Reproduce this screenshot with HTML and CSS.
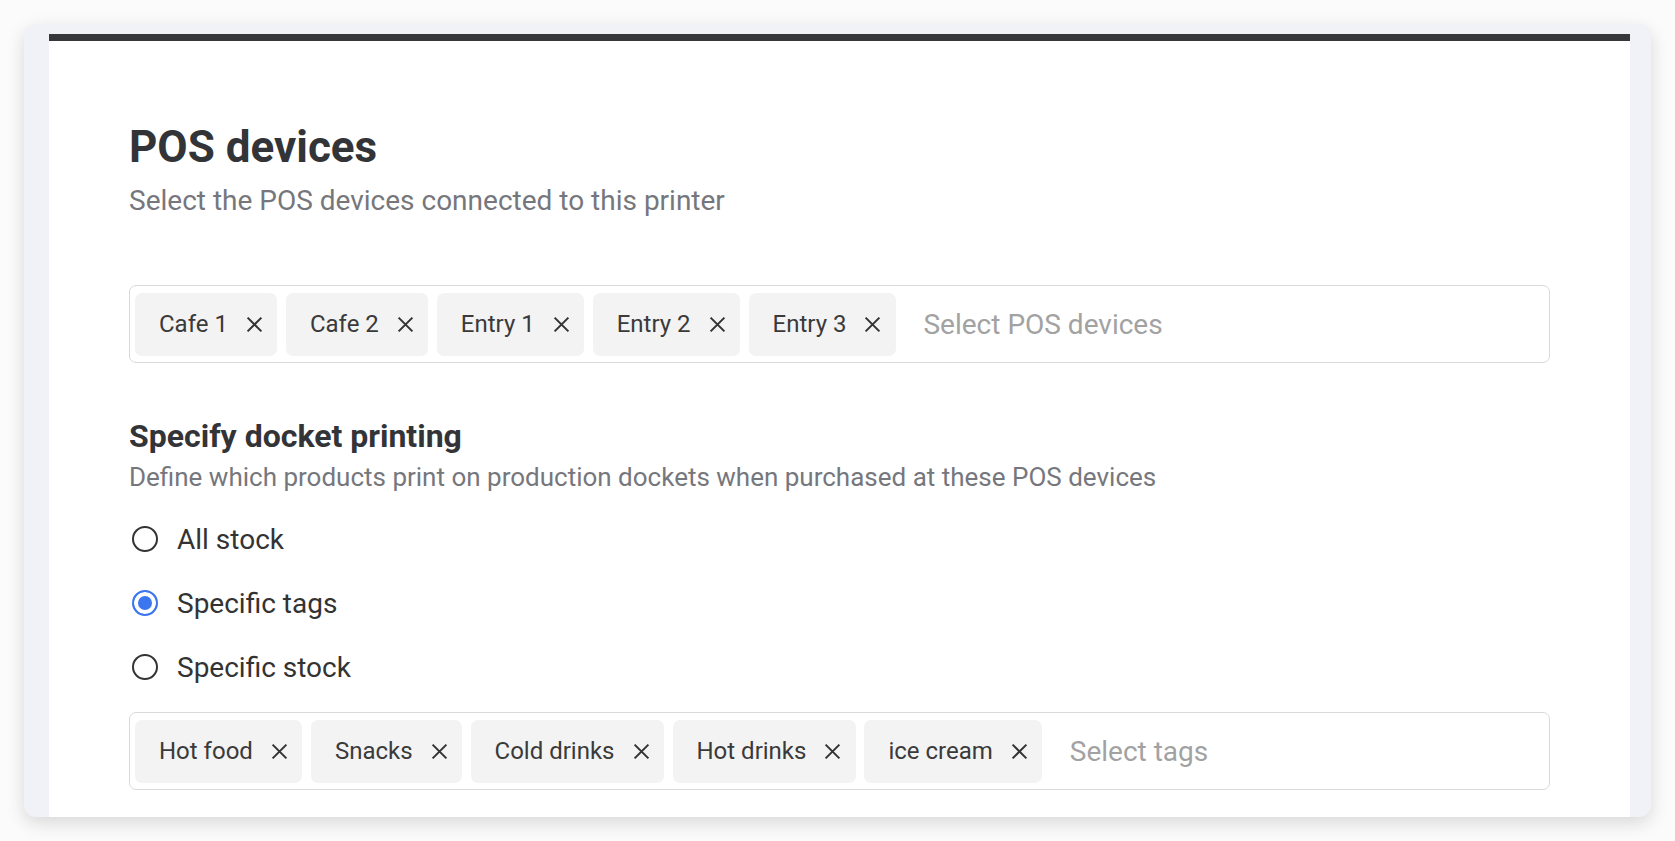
FILE: index.html
```html
<!DOCTYPE html>
<html lang="en">
<head>
    <meta charset="UTF-8">
    <meta name="viewport" content="width=device-width, initial-scale=1.0">
    <title>Printer settings</title>
    <link rel="stylesheet" href="styles.css">
</head>
<body>
    <div class="frame">
        <div class="panel">
            <h1 class="title">POS devices</h1>
            <p class="subtitle">Select the POS devices connected to this printer</p>

            <div class="select-box">
                <span class="chip">Cafe 1 <svg class="chip-x" viewBox="0 0 16 16"><path d="M1.5 1.5L14.5 14.5M14.5 1.5L1.5 14.5"/></svg></span>
                <span class="chip">Cafe 2 <svg class="chip-x" viewBox="0 0 16 16"><path d="M1.5 1.5L14.5 14.5M14.5 1.5L1.5 14.5"/></svg></span>
                <span class="chip">Entry 1 <svg class="chip-x" viewBox="0 0 16 16"><path d="M1.5 1.5L14.5 14.5M14.5 1.5L1.5 14.5"/></svg></span>
                <span class="chip">Entry 2 <svg class="chip-x" viewBox="0 0 16 16"><path d="M1.5 1.5L14.5 14.5M14.5 1.5L1.5 14.5"/></svg></span>
                <span class="chip">Entry 3 <svg class="chip-x" viewBox="0 0 16 16"><path d="M1.5 1.5L14.5 14.5M14.5 1.5L1.5 14.5"/></svg></span>
                <input type="text" placeholder="Select POS devices">
            </div>

            <h2 class="section-title">Specify docket printing</h2>
            <p class="section-desc">Define which products print on production dockets when purchased at these POS devices</p>

            <div class="options">
                <label class="option"><input type="radio" name="docket"> <span>All stock</span></label>
                <label class="option"><input type="radio" name="docket" checked> <span>Specific tags</span></label>
                <label class="option"><input type="radio" name="docket"> <span>Specific stock</span></label>
            </div>

            <div class="select-box tags-box">
                <span class="chip">Hot food <svg class="chip-x" viewBox="0 0 16 16"><path d="M1.5 1.5L14.5 14.5M14.5 1.5L1.5 14.5"/></svg></span>
                <span class="chip">Snacks <svg class="chip-x" viewBox="0 0 16 16"><path d="M1.5 1.5L14.5 14.5M14.5 1.5L1.5 14.5"/></svg></span>
                <span class="chip">Cold drinks <svg class="chip-x" viewBox="0 0 16 16"><path d="M1.5 1.5L14.5 14.5M14.5 1.5L1.5 14.5"/></svg></span>
                <span class="chip">Hot drinks <svg class="chip-x" viewBox="0 0 16 16"><path d="M1.5 1.5L14.5 14.5M14.5 1.5L1.5 14.5"/></svg></span>
                <span class="chip">ice cream <svg class="chip-x" viewBox="0 0 16 16"><path d="M1.5 1.5L14.5 14.5M14.5 1.5L1.5 14.5"/></svg></span>
                <input type="text" placeholder="Select tags">
            </div>
        </div>
    </div>
</body>
</html>
```

FILE: styles.css
```css
* {
    margin: 0;
    padding: 0;
    box-sizing: border-box;
    font-family: Roboto, "Liberation Sans", sans-serif;
}

body {
    background: #fbfbfb;
    height: 841px;
    overflow: hidden;
}

.frame {
    margin: 24px 24px 0 24px;
    height: 793px;
    background: #f1f2f7;
    border-radius: 12px;
    padding: 10px 21px 0 25px;
    overflow: hidden;
    box-shadow: 0 6px 18px rgba(0,0,0,0.14);
}

.panel {
    background: #fff;
    height: 100%;
    border-top: 7px solid #36373b;
    padding: 80px 80px 0 80px;
}

.title {
    font-size: 44px;
    line-height: 52px;
    font-weight: 700;
    color: #333438;
}

.subtitle {
    margin-top: 10px;
    font-size: 28px;
    line-height: 36px;
    color: #76777d;
}

.select-box {
    margin-top: 66px;
    display: flex;
    align-items: center;
    gap: 8.5px;
    height: 78px;
    padding: 0 5px;
    border: 1.5px solid #d9d9d9;
    border-radius: 7px;
}

.chip {
    display: flex;
    align-items: center;
    height: 63px;
    padding: 0 14.5px 0 24px;
    background: #f3f3f3;
    border-radius: 7px;
    font-size: 24px;
    color: #3a3a3a;
    white-space: nowrap;
}

.chip-x {
    width: 17px;
    height: 17px;
    margin-left: 18px;
    fill: none;
    stroke: #333;
    stroke-width: 1.9;
}

.select-box input {
    flex: 1;
    min-width: 0;
    border: none;
    outline: none;
    background: transparent;
    padding-left: 19px;
    font-size: 28px;
    color: #333;
}

.select-box input::placeholder {
    color: #a2a2a2;
}

.section-title {
    margin-top: 53px;
    font-size: 32px;
    line-height: 40px;
    font-weight: 700;
    color: #333438;
}

.section-desc {
    margin-top: 3px;
    font-size: 26px;
    line-height: 36px;
    color: #76777d;
}

.options {
    margin-top: 24px;
    display: flex;
    flex-direction: column;
    gap: 24px;
}

.option {
    display: flex;
    align-items: center;
    height: 40px;
    font-size: 28px;
    color: #333;
}

.option input {
    appearance: none;
    width: 26px;
    height: 26px;
    margin: 0 19px 0 3px;
    border: 2.5px solid #333;
    border-radius: 50%;
    background: #fff;
}

.option input:checked {
    border-color: #3b76f0;
    background: #3b76f0;
    box-shadow: inset 0 0 0 4px #fff;
}

.tags-box {
    margin-top: 25px;
}
```
